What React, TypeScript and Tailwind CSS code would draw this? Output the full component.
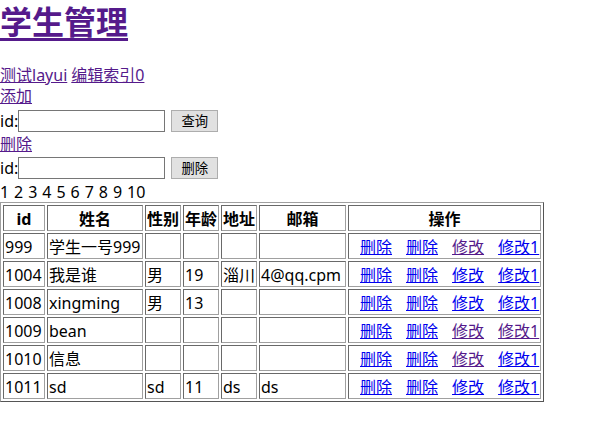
import React from "react";

const V = "text-[#551A8B] underline";
const B = "text-[#0000EE] underline";

const rows: { c: string[]; v: boolean[] }[] = [
  { c: ["999", "学生一号999", "", "", "", ""], v: [false, false, true, false] },
  { c: ["1004", "我是谁", "男", "19", "淄川", "4@qq.cpm"], v: [false, false, false, false] },
  { c: ["1008", "xingming", "男", "13", "", ""], v: [false, false, false, false] },
  { c: ["1009", "bean", "", "", "", ""], v: [false, false, true, true] },
  { c: ["1010", "信息", "", "", "", ""], v: [false, false, true, false] },
  { c: ["1011", "sd", "sd", "11", "ds", "ds"], v: [false, false, false, false] },
];

const cell =
  "border border-t-[#696969] border-l-[#696969] border-r-[#a0a0a0] border-b-[#a0a0a0] px-[1px] pt-[3px] pb-0 leading-[21px] align-middle whitespace-nowrap overflow-hidden";

const heads = [
  { t: "id", w: "w-[42px]" },
  { t: "姓名", w: "w-[96px]" },
  { t: "性别", w: "w-[36px]" },
  { t: "年龄", w: "w-[36px]" },
  { t: "地址", w: "w-[36px]" },
  { t: "邮箱", w: "w-[87px]" },
  { t: "操作", w: "w-[193px]" },
];

const actions = ["删除", "删除", "修改", "修改1"];

export default function App() {
  return (
    <div className="min-h-[422px] w-[597px] bg-white text-black text-[16px] font-['Noto_Sans','Noto_Sans_CJK_SC',sans-serif]">
      <h1 className="h-[42px] leading-[44px] text-[32px] font-bold mb-[21px]">
        <a className={`${V} underline-offset-[4px]`}>学生管理</a>
      </h1>
      <div className="leading-[25px] h-[21px] flex gap-[4px]">
        <a className={V}>测试layui</a>
        <a className={V}>编辑索引0</a>
      </div>
      <div className="leading-[25px] h-[21px]">
        <a className={V}>添加</a>
      </div>
      <div className="h-[27px] pt-[5px] flex items-start">
        <div className="flex items-center h-[22px]">
          <span className="leading-[21px]">id:</span>
          <input className="w-[147px] h-[22px] border border-[#767676] bg-white outline-none" />
          <button className="ml-[6px] w-[47px] h-[22px] border border-[#adadad] bg-[#e1e1e1] text-[13.33px] leading-[20px] text-black">
            查询
          </button>
        </div>
      </div>
      <div className="leading-[25px] h-[21px]">
        <a className={V}>删除</a>
      </div>
      <div className="h-[27px] pt-[4px] flex items-start">
        <div className="flex items-center h-[22px]">
          <span className="leading-[21px]">id:</span>
          <input className="w-[147px] h-[22px] border border-[#767676] bg-white outline-none" />
          <button className="ml-[6px] w-[47px] h-[22px] border border-[#adadad] bg-[#e1e1e1] text-[13.33px] leading-[20px] text-black">
            删除
          </button>
        </div>
      </div>
      <div className="leading-[24px] h-[21px] [word-spacing:0.8px]">1 2 3 4 5 6 7 8 9 10</div>
      <table className="mt-[1px] w-[544px] table-fixed border-separate border-spacing-[2px] border border-t-[#a0a0a0] border-l-[#a0a0a0] border-r-[#555555] border-b-[#555555]">
        <thead>
          <tr>
            {heads.map((h) => (
              <th key={h.t} className={`${cell} ${h.w} text-center font-bold`}>
                {h.t}
              </th>
            ))}
          </tr>
        </thead>
        <tbody>
          {rows.map((r, i) => (
            <tr key={i}>
              {r.c.map((c, j) => (
                <td key={j} className={`${cell} text-left`}>
                  {c}
                </td>
              ))}
              <td className={cell}>
                <div className="flex gap-[14px] pl-[10px] h-[21px] items-center">
                  {actions.map((a, k) => (
                    <a key={k} className={r.v[k] ? V : B}>
                      {a}
                    </a>
                  ))}
                </div>
              </td>
            </tr>
          ))}
        </tbody>
      </table>
    </div>
  );
}
